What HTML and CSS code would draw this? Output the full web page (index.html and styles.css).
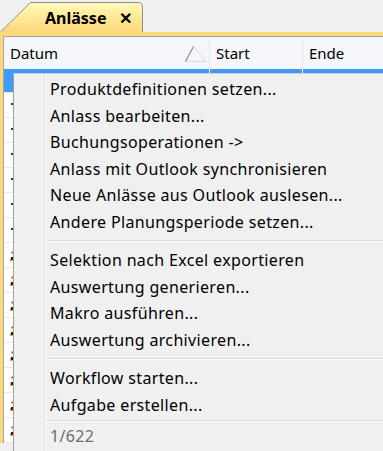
FILE: index.html
```html
<!DOCTYPE html>
<html lang="de">
<head>
    <meta charset="UTF-8">
    <meta name="viewport" content="width=device-width, initial-scale=1.0">
    <title>Anlässe</title>
    <link rel="stylesheet" href="styles.css">
</head>
<body>
<div class="window">
    <!-- Tab strip -->
    <div class="tabbar">
        <div class="tab">
            <svg class="tab-shape" width="144" height="32" viewBox="0 0 144 32">
                <defs>
                    <linearGradient id="tabFill" x1="0" y1="0" x2="0" y2="1">
                        <stop offset="0" stop-color="#fff8bd"/>
                        <stop offset="0.45" stop-color="#ffeb9a"/>
                        <stop offset="1" stop-color="#fdd77b"/>
                    </linearGradient>
                </defs>
                <path d="M0.5 32 L30.5 2.5 H138 Q142.5 2.5 142.5 7 V32" fill="url(#tabFill)" stroke="#8f8f8f" stroke-width="1"/>
            </svg>
            <span class="tab-title">Anlässe</span>
            <span class="tab-close">✕</span>
        </div>
    </div>
    <div class="tab-band"></div>

    <!-- Grid -->
    <div class="panel">
        <div class="grid">
            <div class="grid-head">
                <div class="col col-datum">Datum
                    <svg class="sort" width="24" height="18" viewBox="0 0 24 18">
                        <path d="M1.5 16.5 L22 16.5 L9.5 1.5" fill="none" stroke="#dadada" stroke-width="1"/>
                        <path d="M1.5 16.5 L9.5 1.5" fill="none" stroke="#6e6e6e" stroke-width="1"/>
                    </svg>
                </div>
                <div class="col col-start">Start</div>
                <div class="col col-ende">Ende</div>
            </div>
            <div class="grid-body">
                <div class="row selected"><span class="c1"></span><span class="c2"></span><span class="c3"></span></div>
                <div class="row"><span class="c1"><i class="mark"></i></span><span class="c2"></span><span class="c3"></span></div>
                <div class="row"><span class="c1"><i class="mark"></i></span><span class="c2"></span><span class="c3"></span></div>
                <div class="row"><span class="c1"><i class="mark"></i></span><span class="c2"></span><span class="c3"></span></div>
                <div class="row"><span class="c1"><i class="mark"></i></span><span class="c2"></span><span class="c3"></span></div>
                <div class="row"><span class="c1"><i class="mark"></i></span><span class="c2"></span><span class="c3"></span></div>
                <div class="row"><span class="c1"><i class="mark"></i></span><span class="c2"></span><span class="c3"></span></div>
                <div class="row"><span class="c1"><i class="mark icon"></i></span><span class="c2"></span><span class="c3"></span></div>
                <div class="row"><span class="c1"><i class="mark icon"></i></span><span class="c2"></span><span class="c3"></span></div>
                <div class="row"><span class="c1"><i class="mark icon"></i></span><span class="c2"></span><span class="c3"></span></div>
                <div class="row"><span class="c1"><i class="mark icon"></i></span><span class="c2"></span><span class="c3"></span></div>
                <div class="row"><span class="c1"><i class="mark icon"></i></span><span class="c2"></span><span class="c3"></span></div>
                <div class="row"><span class="c1"><i class="mark icon"></i></span><span class="c2"></span><span class="c3"></span></div>
                <div class="row"><span class="c1"><i class="mark icon"></i></span><span class="c2"></span><span class="c3"></span></div>
                <div class="row"><span class="c1"><i class="mark icon"></i></span><span class="c2"></span><span class="c3"></span></div>
            </div>
        </div>
    </div>

    <!-- Context menu -->
    <div class="menu">
        <div class="menu-item">Produktdefinitionen setzen...</div>
        <div class="menu-item">Anlass bearbeiten...</div>
        <div class="menu-item">Buchungsoperationen -&gt;</div>
        <div class="menu-item">Anlass mit Outlook synchronisieren</div>
        <div class="menu-item">Neue Anlässe aus Outlook auslesen...</div>
        <div class="menu-item">Andere Planungsperiode setzen...</div>
        <div class="menu-sep"></div>
        <div class="menu-item">Selektion nach Excel exportieren</div>
        <div class="menu-item">Auswertung generieren...</div>
        <div class="menu-item">Makro ausführen...</div>
        <div class="menu-item">Auswertung archivieren...</div>
        <div class="menu-sep"></div>
        <div class="menu-item">Workflow starten...</div>
        <div class="menu-item">Aufgabe erstellen...</div>
        <div class="menu-sep tight"></div>
        <div class="menu-item disabled">1/622</div>
    </div>
</div>
</body>
</html>
```

FILE: styles.css
```css
/* General */
body {
    margin: 0;
    padding: 0;
    background: #f0f0f0;
    font-family: 'Noto Sans', 'Open Sans', sans-serif;
    color: #000;
}

.window {
    position: relative;
    width: 383px;
    height: 451px;
    overflow: hidden;
}

/* Tab strip */
.tabbar {
    height: 32px;
}

.tab {
    position: relative;
    display: flex;
    align-items: center;
    width: 144px;
    height: 32px;
}

.tab-shape {
    position: absolute;
    left: 0;
    top: 0;
}

.tab-title {
    position: relative;
    margin-left: 45px;
    margin-top: 3px;
    font-weight: bold;
    font-size: 16px;
}

.tab-close {
    position: relative;
    margin-left: 13px;
    margin-top: 3px;
    font-weight: bold;
    font-size: 16px;
}

.tab-band {
    height: 4px;
    background: #fdd77b;
}

/* Panel & grid */
.panel {
    border-left: 3px solid #fdd77b;
}

.grid {
    border-left: 1px solid #a3a3a3;
    border-top: 1px solid #a3a3a3;
    background: #fff;
}

.grid-head {
    display: flex;
    height: 32px;
    background: #f4f6f9;
    font-size: 15px;
}

.col {
    display: flex;
    align-items: center;
    padding-left: 6px;
    border-right: 1px solid #e3e5e8;
}

.col-datum {
    width: 199px;
}

.sort {
    margin-left: auto;
    margin-right: 1px;
    margin-top: 2px;
}

.col-start {
    width: 86px;
}

.col-ende {
    flex: 1;
    border-right: none;
}

.row {
    display: flex;
    height: 24px;
    border-bottom: 1px solid #e9e9e9;
}

.row span {
    border-right: 1px solid #e9e9e9;
}

.row .c1 {
    width: 205px;
    position: relative;
}

.row .c2 {
    width: 92px;
}

.row .c3 {
    flex: 1;
    border-right: none;
}

.row.selected {
    height: 23px;
    background: #3d9af7;
}

.row.selected span {
    border-right-color: #fff;
}

.mark {
    position: absolute;
    left: 7px;
    top: 10px;
    width: 2px;
    height: 2px;
    background: #333;
}

.mark.icon {
    top: 14px;
    width: 3px;
    height: 3px;
    background: #1d1d1d;
    box-shadow: -1px 1px 0 #f0a030, 0 -6px 0 -0.5px #c04040;
}

/* Context menu */
.menu {
    position: absolute;
    left: 13px;
    top: 73px;
    right: -4px;
    bottom: -4px;
    padding-top: 2px;
    background: #f0f0f0 linear-gradient(to right, transparent 30px, #e2e2e2 30px, #e2e2e2 31px, #fff 31px, #fff 32px, transparent 32px);
    border: 1px solid #a0a0a0;
    border-top-color: #cfcfcf;
    font-size: 16px;
    letter-spacing: 0.35px;
}

.menu-item {
    height: 26.5px;
    line-height: 26.5px;
    padding-left: 36px;
    white-space: nowrap;
}

.menu-item.disabled {
    color: #6d6d6d;
}

.menu-sep {
    height: 1px;
    margin: 5px 0 5px 32px;
    background: #dadada;
    border-bottom: 1px solid #fff;
}

.menu-sep.tight {
    margin: 2px 0 1px 32px;
}
```
